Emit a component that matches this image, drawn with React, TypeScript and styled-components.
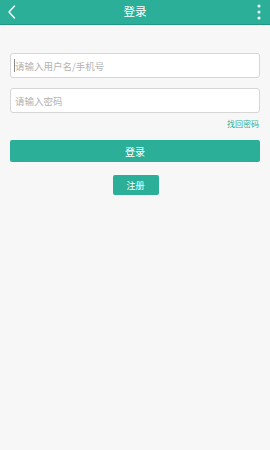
import styled, { createGlobalStyle } from "styled-components";

const Global = createGlobalStyle`
  html, body {
    margin: 0;
    padding: 0;
    background: #f7f7f7;
    font-family: "Noto Sans CJK SC", "Noto Sans", sans-serif;
  }
  * { box-sizing: border-box; }
`;

const teal = "#2baf98";

const Page = styled.div`
  width: 270px;
  min-height: 450px;
  background: #f7f7f7;
`;

const Header = styled.div`
  height: 25px;
  background: ${teal};
  border-bottom: 1px solid #1f9883;
  display: flex;
  align-items: center;
  justify-content: space-between;
  padding: 0 5px 0 5px;
`;

const Title = styled.h1`
  margin: 0;
  font-size: 11.5px;
  font-weight: 400;
  color: #fff;
  line-height: 1;
`;

const IconSlot = styled.div`
  width: 12px;
  height: 24px;
  display: flex;
  align-items: center;
  justify-content: center;
`;

const Form = styled.div`
  padding: 28px 10px 0;
  display: flex;
  flex-direction: column;
`;

const Field = styled.div<{ $gap?: number }>`
  height: 25px;
  background: #fff;
  border: 1px solid #d6d6d6;
  border-radius: 3px;
  display: flex;
  align-items: center;
  padding: 0 3px;
  margin-bottom: ${({ $gap }) => $gap ?? 0}px;
`;

const Caret = styled.span`
  width: 1px;
  height: 13px;
  background: #8a8a8a;
  flex: none;
`;

const Input = styled.input`
  flex: 1;
  min-width: 0;
  border: none;
  outline: none;
  background: transparent;
  padding: 0;
  font-family: inherit;
  font-size: 9.5px;
  color: #333;
  &::placeholder {
    color: #b3b3b3;
  }
`;

const Forgot = styled.a`
  align-self: flex-end;
  margin: 6px 1px 0 0;
  font-size: 8px;
  line-height: 10px;
  color: ${teal};
  text-decoration: none;
`;

const Button = styled.button<{ $wide?: boolean }>`
  border: none;
  border-radius: 2px;
  background: ${teal};
  color: #fff;
  font-family: inherit;
  padding: 0;
  width: ${({ $wide }) => ($wide ? "100%" : "46px")};
  height: ${({ $wide }) => ($wide ? "22px" : "20px")};
  font-size: ${({ $wide }) => ($wide ? "10px" : "9px")};
  align-self: center;
`;

const LoginWrap = styled.div`
  margin-top: 11px;
  display: flex;
`;

const RegisterWrap = styled.div`
  margin-top: 13px;
  display: flex;
  justify-content: center;
  padding-left: 1px;
`;

export default function App() {
  return (
    <Page>
      <Global />
      <Header>
        <IconSlot>
          <svg width="9" height="14" viewBox="0 0 9 14">
            <polyline
              points="7.5,1 2,7 7.5,13"
              fill="none"
              stroke="#fff"
              strokeWidth="1.4"
              strokeLinecap="round"
              strokeLinejoin="round"
            />
          </svg>
        </IconSlot>
        <Title>登录</Title>
        <IconSlot>
          <svg width="4" height="16" viewBox="0 0 4 16">
            <circle cx="2" cy="2" r="1.5" fill="#fff" />
            <circle cx="2" cy="8" r="1.5" fill="#fff" />
            <circle cx="2" cy="14" r="1.5" fill="#fff" />
          </svg>
        </IconSlot>
      </Header>
      <Form>
        <Field $gap={10}>
          <Caret />
          <Input placeholder="请输入用户名/手机号" />
        </Field>
        <Field>
          <Input type="password" placeholder="请输入密码" style={{ paddingLeft: 1 }} />
        </Field>
        <Forgot href="#">找回密码</Forgot>
        <LoginWrap>
          <Button $wide>登录</Button>
        </LoginWrap>
        <RegisterWrap>
          <Button>注册</Button>
        </RegisterWrap>
      </Form>
    </Page>
  );
}
